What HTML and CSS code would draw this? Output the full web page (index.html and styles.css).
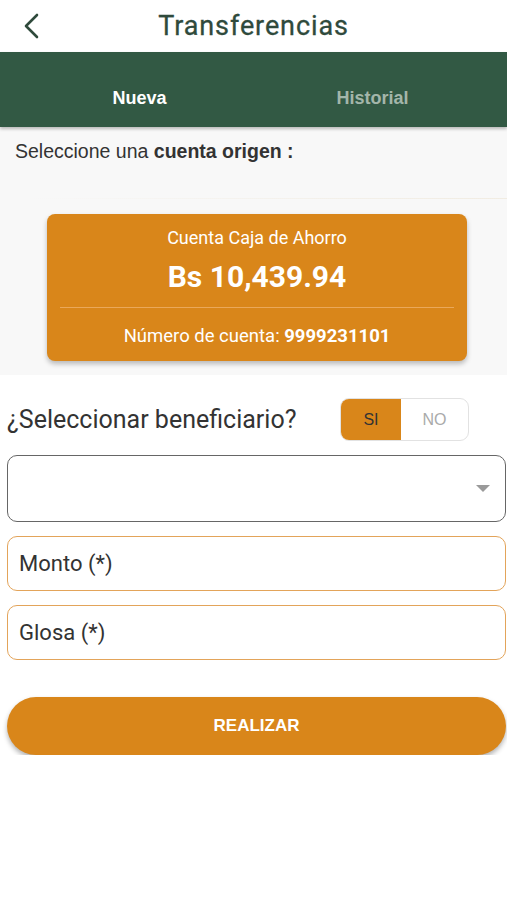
FILE: index.html
```html
<!DOCTYPE html>
<html lang="es">
<head>
  <meta charset="UTF-8">
  <title>Transferencias</title>
  <link rel="stylesheet" href="styles.css">
</head>
<body>
  <header class="topbar">
    <a class="back" href="#">
      <svg width="18" height="26" viewBox="0 0 18 26"><path d="M15 2 L4 13 L15 24" fill="none" stroke="#2f4a3c" stroke-width="2.6" stroke-linecap="round" stroke-linejoin="round"/></svg>
    </a>
    <h1>Transferencias</h1>
  </header>

  <nav class="tabs">
    <span class="tab active">Nueva</span>
    <span class="tab">Historial</span>
  </nav>

  <section class="origin">
    <p class="hint">Seleccione una <b>cuenta origen :</b></p>
    <div class="rule"></div>
    <div class="card">
      <div class="card-type">Cuenta Caja de Ahorro</div>
      <div class="card-amount">Bs 10,439.94</div>
      <div class="card-line"></div>
      <div class="card-number">Número de cuenta: <b>9999231101</b></div>
    </div>
  </section>

  <form class="form">
    <div class="benef">
      <span>¿Seleccionar beneficiario?</span>
      <div class="toggle">
        <span class="opt on">SI</span>
        <span class="opt">NO</span>
      </div>
    </div>

    <div class="select">
      <svg width="14" height="8" viewBox="0 0 14 8"><path d="M0 0 L14 0 L7 7 Z" fill="#9a9a9a"/></svg>
    </div>

    <div class="field">Monto (*)</div>
    <div class="field">Glosa (*)</div>

    <button type="button" class="submit">REALIZAR</button>
  </form>
</body>
</html>
```

FILE: styles.css
```css
body {
  margin: 0;
  font-family: Roboto, "Liberation Sans", sans-serif;
  background: #fff;
  color: #333;
}
.topbar {
  height: 52px;
  display: flex;
  align-items: center;
  justify-content: center;
  position: relative;
}
.back {
  position: absolute;
  left: 22px;
  top: 13px;
}
.topbar h1 {
  margin: 0;
  font-family: Roboto, "Liberation Sans", sans-serif;
  font-size: 27px;
  font-weight: normal;
  color: #2f4a3c;
  letter-spacing: 0.9px;
  -webkit-text-stroke: 0.3px #2f4a3c;
}
.tabs {
  height: 75px;
  background: #325944;
  display: flex;
  padding: 0 18px 0 23px;
  box-shadow: 0 2px 3px rgba(0, 0, 0, 0.25);
  position: relative;
}
.tab {
  flex: 1;
  text-align: center;
  padding-top: 36px;
  font-family: "Liberation Sans", sans-serif;
  font-size: 18px;
  font-weight: bold;
  color: #a3b6aa;
}
.tab.active {
  color: #fff;
}
.origin {
  background: #f8f8f8;
  padding: 13px 0 14px;
}
.hint {
  margin: 0 0 0 15px;
  font-family: "Liberation Sans", sans-serif;
  font-size: 19.5px;
  line-height: 23px;
  color: #333;
}
.rule {
  height: 1px;
  margin: 35px 0 0 28px;
  background: linear-gradient(to right, #f8f8f8, #f1ece2);
}
.card {
  margin: 15px 40px 0 47px;
  background: #d9861a;
  border-radius: 8px;
  color: #fff;
  text-align: center;
  padding: 13px 13px 14px;
  box-shadow: 0 3px 5px rgba(0, 0, 0, 0.25);
}
.card-type {
  font-size: 18px;
  line-height: 21px;
}
.card-amount {
  font-size: 30px;
  line-height: 35px;
  font-weight: bold;
  margin-top: 11px;
}
.card-line {
  height: 1px;
  background: #eaa85a;
  margin-top: 13px;
}
.card-number {
  font-size: 18.5px;
  line-height: 22px;
  margin-top: 17px;
}
.form {
  padding: 23px 1px 0 7px;
}
.benef {
  display: flex;
  align-items: center;
  justify-content: space-between;
  font-size: 25px;
  padding-right: 37px;
}
.toggle {
  display: flex;
  height: 43px;
  border: 1px solid #e2e2e2;
  border-radius: 9px;
  overflow: hidden;
  box-sizing: border-box;
}
.opt {
  width: 67px;
  display: flex;
  align-items: center;
  justify-content: center;
  font-family: "Liberation Sans", sans-serif;
  font-size: 16px;
  color: #aaa;
}
.opt.on {
  width: 60px;
  background: #d9861a;
  color: #333;
}
.select {
  height: 67px;
  margin-top: 14px;
  border: 1.5px solid #666;
  border-radius: 10px;
  display: flex;
  align-items: center;
  justify-content: flex-end;
  padding-right: 15px;
  box-sizing: border-box;
}
.field {
  height: 55px;
  margin-top: 14px;
  border: 1.5px solid #e3a45a;
  border-radius: 10px;
  display: flex;
  align-items: center;
  padding-left: 11px;
  font-size: 22px;
  color: #333;
  box-sizing: border-box;
}
.submit {
  display: block;
  width: 100%;
  height: 58px;
  margin-top: 37px;
  border: none;
  border-radius: 29px;
  background: #d9861a;
  color: #fff;
  font-family: "Liberation Sans", sans-serif;
  font-size: 17px;
  font-weight: bold;
  box-shadow: 0 3px 5px rgba(0, 0, 0, 0.3);
}
```
